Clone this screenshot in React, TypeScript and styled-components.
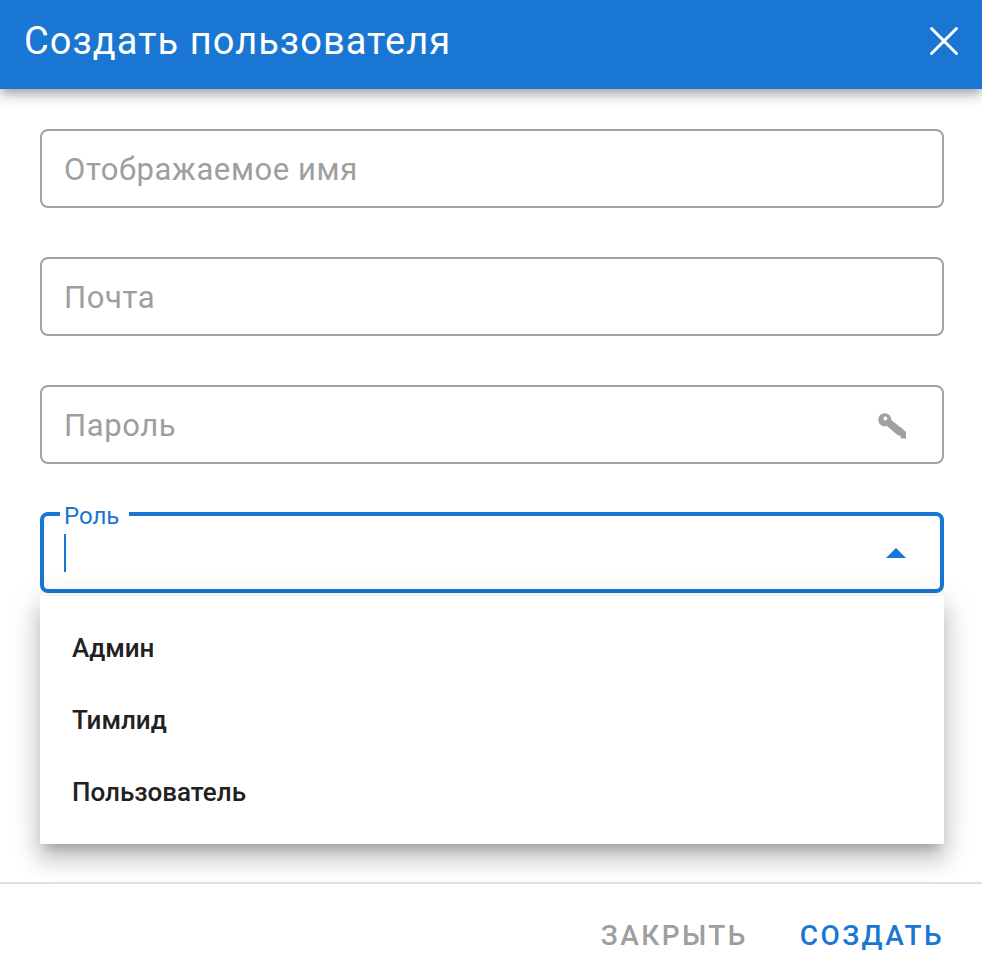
import styled, { createGlobalStyle } from 'styled-components';

const GlobalStyle = createGlobalStyle`
	html, body {
		margin: 0;
		padding: 0;
		background: #fff;
		font-family: Roboto, "Noto Sans", sans-serif;
	}
`;

const Dialog = styled.div`
	display: flex;
	flex-direction: column;
	width: 982px;
	height: 972px;
	background: #fff;
	overflow: hidden;
`;

const Header = styled.header`
	display: flex;
	align-items: center;
	justify-content: space-between;
	flex: none;
	height: 89px;
	padding: 0 23px 8px 24px;
	box-sizing: border-box;
	background: #1976d2;
	box-shadow: 0 4px 8px -2px rgba(0, 0, 0, 0.2), 0 8px 10px 0 rgba(0, 0, 0, 0.14), 0 2px 20px 0 rgba(0, 0, 0, 0.12);
	position: relative;
	z-index: 1;
`;

const Title = styled.h1`
	margin: 0;
	color: #fff;
	font-size: 38px;
	font-weight: 400;
	letter-spacing: 1.05px;
`;

const CloseIcon = styled.svg`
	display: block;
	width: 30px;
	height: 30px;
`;

const Body = styled.div`
	display: flex;
	flex: 1;
	flex-direction: column;
	gap: 49px;
	padding: 40px 38px 0 40px;
`;

const Field = styled.div<{ $active?: boolean }>`
	display: flex;
	align-items: center;
	justify-content: space-between;
	position: relative;
	height: ${(p) => (p.$active ? '81px' : '79px')};
	margin: ${(p) => (p.$active ? '-1px 0' : '0')};
	padding: ${(p) => (p.$active ? '0 35px 0 20px' : '0 37px 0 22px')};
	box-sizing: border-box;
	border: ${(p) => (p.$active ? '4px solid #1976d2' : '2px solid #a3a3a3')};
	border-radius: 8px;
`;

const Placeholder = styled.span`
	padding-top: 2px;
	color: #9e9e9e;
	font-size: 31px;
	letter-spacing: 0.6px;
`;

const FloatLabel = styled.label`
	position: absolute;
	top: -13px;
	left: 16px;
	padding: 0 10px 0 4px;
	background: #fff;
	color: #1976d2;
	font-size: 24px;
	line-height: 26px;
`;

const Caret = styled.span`
	display: block;
	width: 2px;
	height: 38px;
	margin-top: 1px;
	background: #1976d2;
`;

const KeyIcon = styled.svg`
	display: block;
	width: 40px;
	height: 40px;
	margin-right: -7px;
	fill: #a0a0a0;
`;

const ArrowUp = styled.span`
	display: block;
	margin-right: -1px;
	border-right: 10px solid transparent;
	border-left: 10px solid transparent;
	border-bottom: 10px solid #1976d2;
`;

const Menu = styled.ul`
	position: absolute;
	top: 596px;
	left: 40px;
	width: 904px;
	margin: 0;
	padding: 16px 0;
	box-sizing: border-box;
	list-style: none;
	background: #fff;
	box-shadow: 0 10px 10px -6px rgba(0, 0, 0, 0.2), 0 16px 20px 2px rgba(0, 0, 0, 0.14), 0 6px 28px 4px rgba(0, 0, 0, 0.12);
	z-index: 2;
`;

const MenuItem = styled.li`
	display: flex;
	align-items: center;
	height: 72px;
	padding-left: 32px;
	color: #212121;
	font-size: 26px;
	font-weight: 500;
`;

const Footer = styled.footer`
	display: flex;
	align-items: center;
	justify-content: flex-end;
	gap: 52px;
	flex: none;
	height: 90px;
	padding: 14px 38px 0 0;
	box-sizing: border-box;
	border-top: 2px solid #e0e0e0;
`;

const TextButton = styled.button<{ $primary?: boolean }>`
	padding: 0;
	border: 0;
	background: transparent;
	color: ${(p) => (p.$primary ? '#1976d2' : '#9e9e9e')};
	font-family: inherit;
	font-size: 28px;
	font-weight: 500;
	letter-spacing: 2.4px;
	text-transform: uppercase;
	cursor: pointer;
`;

const roles = ['Админ', 'Тимлид', 'Пользователь'];

export default function App() {
	return (
		<Dialog>
			<GlobalStyle />
			<Header>
				<Title>Создать пользователя</Title>
				<CloseIcon viewBox="0 0 30 30" fill="none" stroke="#fff" strokeWidth="3" strokeLinecap="round">
					<path d="M2.5 2.5 L27.5 27.5 M27.5 2.5 L2.5 27.5" />
				</CloseIcon>
			</Header>
			<Body>
				<Field>
					<Placeholder>Отображаемое имя</Placeholder>
				</Field>
				<Field>
					<Placeholder>Почта</Placeholder>
				</Field>
				<Field>
					<Placeholder>Пароль</Placeholder>
					<KeyIcon viewBox="0 0 40 40">
						<path
							fillRule="evenodd"
							d="M19.4 15 L27.8 21.8 L29.2 22.6 L34 27 V33.4 H28.6 V30.4 H26 L15 21 A6.6 6.6 0 1 1 19.4 15 Z M15.4 13.4 a2 2 0 1 0 -4 0 a2 2 0 1 0 4 0 Z"
						/>
					</KeyIcon>
				</Field>
				<Field $active>
					<FloatLabel>Роль</FloatLabel>
					<Caret />
					<ArrowUp />
				</Field>
			</Body>
			<Menu>
				{roles.map((role) => (
					<MenuItem key={role}>{role}</MenuItem>
				))}
			</Menu>
			<Footer>
				<TextButton>Закрыть</TextButton>
				<TextButton $primary>Создать</TextButton>
			</Footer>
		</Dialog>
	);
}
